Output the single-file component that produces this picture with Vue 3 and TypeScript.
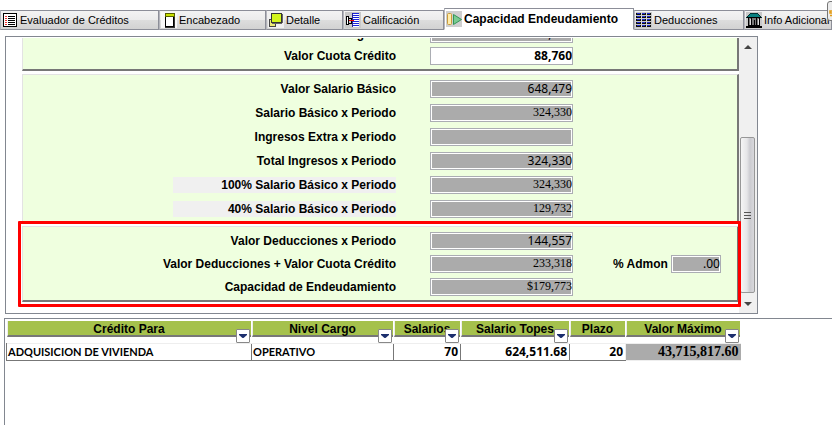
<script setup lang="ts">
import { ref } from 'vue'

interface Tab {
  id: string
  text: string
}
interface Field {
  id: string
  label: string
  value: string
  serif?: boolean
  editable?: boolean
  shaded?: boolean
}
interface Column {
  key: string
  title: string
  filter: boolean
}

const tabs: Tab[] = [
  { id: 'evaluador', text: 'Evaluador de Créditos' },
  { id: 'encabezado', text: 'Encabezado' },
  { id: 'detalle', text: 'Detalle' },
  { id: 'calificacion', text: 'Calificación' },
  { id: 'capacidad', text: 'Capacidad Endeudamiento' },
  { id: 'deducciones', text: 'Deducciones' },
  { id: 'info', text: 'Info Adicional' },
]
const active = ref('capacidad')

const cuota = ref<Field[]>([
  { id: 'total', label: 'Total Ingresos', value: '324,330' },
  { id: 'cuota', label: 'Valor Cuota Crédito', value: '88,760', editable: true },
])
const ingresos = ref<Field[]>([
  { id: 'basico', label: 'Valor Salario Básico', value: '648,479' },
  { id: 'basico-periodo', label: 'Salario Básico x Periodo', value: '324,330', serif: true },
  { id: 'extra', label: 'Ingresos Extra x Periodo', value: '' },
  { id: 'total-periodo', label: 'Total Ingresos x Periodo', value: '324,330' },
  { id: 'cien', label: '100% Salario Básico x Periodo', value: '324,330', serif: true, shaded: true },
  { id: 'cuarenta', label: '40% Salario Básico x Periodo', value: '129,732', serif: true, shaded: true },
])
const deducciones = ref<Field[]>([
  { id: 'ded', label: 'Valor Deducciones x Periodo', value: '144,557' },
  { id: 'ded-cuota', label: 'Valor Deducciones + Valor Cuota Crédito', value: '233,318', serif: true },
  { id: 'cap', label: 'Capacidad de Endeudamiento', value: '$179,773', serif: true },
])
const admon = ref('.00')

const columns: Column[] = [
  { key: 'credito', title: 'Crédito Para', filter: true },
  { key: 'cargo', title: 'Nivel Cargo', filter: true },
  { key: 'salarios', title: 'Salarios', filter: true },
  { key: 'topes', title: 'Salario Topes', filter: true },
  { key: 'plazo', title: 'Plazo', filter: false },
  { key: 'maximo', title: 'Valor Máximo', filter: true },
]
const rows: Record<string, string>[] = [
  {
    credito: 'ADQUISICION DE VIVIENDA',
    cargo: 'OPERATIVO',
    salarios: '70',
    topes: '624,511.68',
    plazo: '20',
    maximo: '43,715,817.60',
  },
]
</script>

<template>
  <main class="window">
    <nav class="tabs" role="tablist">
      <button
        v-for="tab in tabs"
        :key="tab.id"
        type="button"
        role="tab"
        class="tab"
        :class="{ active: tab.id === active }"
        :aria-selected="tab.id === active"
        @click="active = tab.id"
      >
        <svg class="icon" viewBox="0 0 16 16" shape-rendering="crispEdges" aria-hidden="true">
          <g v-if="tab.id === 'evaluador'">
            <rect x="1.500" y="1.500" width="13" height="13" fill="#fff" stroke="#000" />
            <path d="M6 4.500h7M6 6.500h7M6 8.500h7M6 10.500h7M6 12.500h7" stroke="#000" />
            <path d="M3 4.500h2M3 6.500h2M3 8.500h2M3 10.500h2M3 12.500h2" stroke="#e33" />
          </g>
          <g v-else-if="tab.id === 'encabezado'">
            <rect width="16" height="16" fill="#f8f8f8" />
            <rect x="4.500" y="3.500" width="8" height="11" fill="#fff" stroke="#000" />
            <rect x="4.500" y="1.500" width="9" height="3" fill="#c8e000" stroke="#566000" />
            <path d="M4 15h9.500v-10" fill="none" stroke="#333" />
          </g>
          <g v-else-if="tab.id === 'detalle'">
            <rect width="16" height="16" fill="#f0f0f0" />
            <path d="M1.500 7.500h3v3h3v4h-6z" fill="#ecec76" stroke="#444" />
            <rect x="3.500" y="1.500" width="10" height="9" fill="#d3f51c" stroke="#333" />
            <path d="M4 11.500h10M14.500 2v9" stroke="#666" />
          </g>
          <g v-else-if="tab.id === 'calificacion'">
            <rect width="16" height="16" fill="#c8c8c8" />
            <rect x="7" y="1" width="7" height="14" fill="#fff" />
            <path d="M7 1.500h7M7 3.500h7M7 5.500h7M7 7.500h7M7 9.500h7M7 11.500h7M7 13.500h7" stroke="#1b24dc" />
            <path d="M7.500 1v14" stroke="#229" />
            <path d="M1.500 4.500h2v8h-2z" fill="#fff" stroke="#000" />
            <path d="M4 6.500h2v5h-2" fill="none" stroke="#000" />
            <path d="M4 8.500h5" stroke="#e00" />
          </g>
          <g v-else-if="tab.id === 'capacidad'" shape-rendering="auto">
            <rect width="16" height="16" fill="#cfcfcf" />
            <rect x="1.500" y="2.500" width="4" height="11" rx="1" fill="#ffedab" stroke="#c89b3c" />
            <path d="M7.500 3.500v10l8-5z" fill="#79cb91" stroke="#359457" />
          </g>
          <g v-else-if="tab.id === 'deducciones'">
            <rect width="16" height="16" fill="#c8c8c8" />
            <path d="M0 1.500h15M0 4.500h15M0 7.500h15M0 10.500h15M0 13.500h15" stroke="#101010" stroke-width="2" />
            <path d="M1 1.500h3M6 1.500h3M11 1.500h3M1 4.500h3M6 4.500h3M11 4.500h3M1 7.500h3M6 7.500h3M11 7.500h3M1 10.500h3M6 10.500h3M11 10.500h3M1 13.500h3M6 13.500h3M11 13.500h3" stroke="#2430d0" />
            <path d="M5 0v15M10 0v15" stroke="#d8d8d8" />
          </g>
          <g v-else>
            <rect width="16" height="16" fill="#c8c8c8" />
            <path d="M1 5l3-3 4-1 4 1 3 3z" fill="#078080" stroke="#033" />
            <path d="M1 5.500h14M2 13.500h12" stroke="#000" />
            <rect x="2" y="6" width="12" height="7" fill="#777" />
            <path d="M2.500 6v7M5.500 6v7M10.500 6v7M13.500 6v7M8 8v5" stroke="#000" />
            <path d="M4 7v6M12 7v6" stroke="#ddd" />
            <path d="M0 14.500h16" stroke="#000" stroke-width="2" />
          </g>
        </svg>
        <span>{{ tab.text }}</span>
      </button>
    </nav>
    <svg class="corner" viewBox="0 0 5 20" aria-hidden="true">
      <path d="M5 .5H3Q.5 .5 .5 3v14Q.5 19.500 3 19.500h2" fill="#ececec" stroke="#777" />
      <path d="M5 10H3v2h2M3 14.500h2" fill="none" stroke="#e39a12" stroke-width="1.500" />
    </svg>

    <section class="panel">
      <div class="content">
        <div class="group clipped">
          <div v-for="f in cuota" :key="f.id" class="row">
            <label :for="f.id">{{ f.label }}</label>
            <input :id="f.id" v-model="f.value" type="text" :class="{ editable: f.editable }" :readonly="!f.editable" />
          </div>
        </div>
        <div class="group middle">
          <div v-for="f in ingresos" :key="f.id" class="row">
            <label :for="f.id" :class="{ shaded: f.shaded }">{{ f.label }}</label>
            <input :id="f.id" v-model="f.value" type="text" :class="{ serif: f.serif }" readonly />
          </div>
        </div>
        <div class="group last">
          <div v-for="f in deducciones" :key="f.id" class="row">
            <label :for="f.id">{{ f.label }}</label>
            <input :id="f.id" v-model="f.value" type="text" :class="{ serif: f.serif }" readonly />
            <div v-if="f.id === 'ded-cuota'" class="admon">
              <label for="admon">% Admon</label>
              <input id="admon" v-model="admon" type="text" readonly />
            </div>
          </div>
          <div class="marker"></div>
        </div>
      </div>
      <div class="scrollbar">
        <button type="button" aria-label="Subir">
          <svg viewBox="0 0 8 4"><path d="M0 4L4 0l4 4z" fill="#444" /></svg>
        </button>
        <div class="track">
          <div class="thumb"><i></i><i></i><i></i></div>
        </div>
        <button type="button" aria-label="Bajar">
          <svg viewBox="0 0 8 4"><path d="M0 0h8L4 4z" fill="#444" /></svg>
        </button>
      </div>
    </section>

    <section class="results">
      <table>
        <colgroup>
          <col v-for="c in columns" :key="c.key" :class="c.key" />
        </colgroup>
        <thead>
          <tr>
            <th v-for="c in columns" :key="c.key" scope="col">
              <div class="head">{{ c.title }}</div>
              <button v-if="c.filter" type="button" class="filter" :aria-label="'Filtrar ' + c.title">
                <svg viewBox="0 0 8 4"><path d="M0 0h8v1L4.500 4h-1L0 1z" fill="#1c2f6e" /></svg>
              </button>
            </th>
          </tr>
        </thead>
        <tbody>
          <tr v-for="(r, i) in rows" :key="i">
            <td v-for="c in columns" :key="c.key" :class="c.key">{{ r[c.key] }}</td>
          </tr>
        </tbody>
      </table>
    </section>
  </main>
</template>

<style>
body {
  margin: 0;
  background: #fff;
}
</style>

<style scoped>
.window {
  position: relative;
  display: flex;
  flex-direction: column;
  min-height: 100vh;
  overflow: hidden;
  font-family: 'Liberation Sans', Arial, sans-serif;
  font-size: 12px;
  color: #000;
}
.window * {
  box-sizing: border-box;
}
.tabs {
  display: grid;
  grid-template-columns: 159px 107px 77px 101px 190px 110px minmax(0, 1fr);
  align-items: end;
  height: 30px;
}
.tab {
  display: flex;
  align-items: center;
  gap: 2px;
  height: 20px;
  padding: 0 0 0 1px;
  overflow: hidden;
  border: 1px solid #8c8e98;
  border-left-color: #b4b5bc;
  background: linear-gradient(#f3f3f3, #ebebeb 50%, #dddddd 51%, #d2d2d2);
  font: 11px 'Liberation Sans', Arial, sans-serif;
  color: #000;
  white-space: nowrap;
}
.tab.active {
  height: 22px;
  border-bottom-color: #fff;
  background: #fff;
  font-size: 12px;
  font-weight: bold;
}
.icon {
  flex: none;
  width: 16px;
  height: 16px;
}
.corner {
  position: absolute;
  top: 1px;
  right: 0;
  width: 5px;
  height: 20px;
}
.panel {
  display: flex;
  height: 278px;
  margin: 6px 74px 0 5px;
  border: 1px solid #828790;
}
.content {
  flex: 1;
  display: flex;
  flex-direction: column;
  gap: 3px;
  min-width: 0;
  padding: 1px 0 0 16px;
}
.group {
  display: flex;
  flex-direction: column;
  gap: 6px;
  border: 1px solid #e3e3e3;
  border-right: 2px solid #777;
  border-bottom: 2px solid #777;
  background: #efffdf;
}
.clipped {
  justify-content: flex-end;
  gap: 4px;
  height: 33px;
  padding-bottom: 4px;
  border-top: 0;
  overflow: hidden;
}
.middle {
  height: 149px;
  padding-top: 5px;
}
.last {
  position: relative;
  gap: 5px;
  height: 76px;
  padding-top: 5px;
}
.marker {
  position: absolute;
  inset: -6px -4px -7px -5px;
  border: 3px solid #f00;
  border-radius: 1px;
  pointer-events: none;
}
.row {
  flex: none;
  display: grid;
  grid-template-columns: 373px 143px 1fr;
  column-gap: 34px;
  align-items: center;
  height: 18px;
}
label {
  justify-self: end;
  font-weight: bold;
  line-height: 16px;
  white-space: nowrap;
}
.shaded {
  width: 223px;
  background: #f0f0f0;
  text-align: right;
}
input {
  width: 100%;
  height: 18px;
  margin: 0;
  padding: 0 0 1px;
  border: 1px solid #abadb3;
  border-radius: 0;
  outline: 0;
  box-shadow: inset 0 0 0 1px #fff;
  background: #ababab;
  font: 12px 'Noto Sans', sans-serif;
  color: #000;
  text-align: right;
}
input.serif {
  font-family: 'Liberation Serif', serif;
}
input.editable {
  background: #fff;
  font-weight: bold;
}
.admon {
  display: flex;
  align-items: center;
  gap: 3px;
  padding-left: 6px;
}
.admon input {
  width: 50px;
}
.scrollbar {
  display: flex;
  flex-direction: column;
  width: 18px;
  padding: 1px;
  background: #f0f0f0;
}
.scrollbar button {
  display: flex;
  align-items: center;
  justify-content: center;
  height: 17px;
  padding: 0;
  border: 0;
  background: none;
}
.scrollbar svg,
.filter svg {
  width: 8px;
  height: 4px;
}
.track {
  flex: 1;
  display: flex;
  flex-direction: column;
  justify-content: flex-end;
  padding-bottom: 2px;
}
.thumb {
  display: flex;
  flex-direction: column;
  align-items: center;
  justify-content: center;
  gap: 2px;
  height: 156px;
  margin-right: 1px;
  border: 1px solid #979797;
  border-radius: 2px;
  background: linear-gradient(90deg, #f5f5f5, #e6e6e8 45%, #cbcbd0 70%, #d8d8dc);
}
.thumb i {
  width: 7px;
  height: 1px;
  background: #555;
}
.results {
  flex: 1;
  margin: 4px 0 0 4px;
  padding: 2px 1px;
  border: solid #828790;
  border-width: 1px 0 0 1px;
}
table {
  table-layout: fixed;
  width: 734px;
  border-collapse: collapse;
}
col.credito {
  width: 245px;
}
col.cargo {
  width: 142px;
}
col.salarios {
  width: 67px;
}
col.topes {
  width: 109px;
}
col.plazo {
  width: 56px;
}
col.maximo {
  width: 115px;
}
th {
  position: relative;
  height: 22px;
  padding: 0 1px 0 0;
  vertical-align: top;
}
.head {
  height: 16px;
  border-left: 1px solid #eee;
  border-bottom: 2px solid #777;
  background: #a5c14c;
  line-height: 16px;
  white-space: nowrap;
}
.filter {
  position: absolute;
  right: 2px;
  top: 8px;
  display: flex;
  align-items: center;
  justify-content: center;
  width: 14px;
  height: 14px;
  padding: 0;
  border: 1px solid #888;
  border-radius: 1px;
  background: #fff;
}
td {
  height: 17px;
  padding: 0 2px 0 1px;
  border-top: 1px solid #eee;
  border-left: 1px solid #777;
  border-bottom: 1px solid #777;
  font: bold 12px/15px 'Open Sans', sans-serif;
  text-align: right;
  white-space: nowrap;
}
td.credito,
td.cargo {
  font-family: Lato, sans-serif;
  font-size: 11px;
  text-align: left;
}
td.maximo {
  border-color: #eee;
  background: #ababab;
  font: bold 14px/15px 'Liberation Serif', serif;
}
</style>
